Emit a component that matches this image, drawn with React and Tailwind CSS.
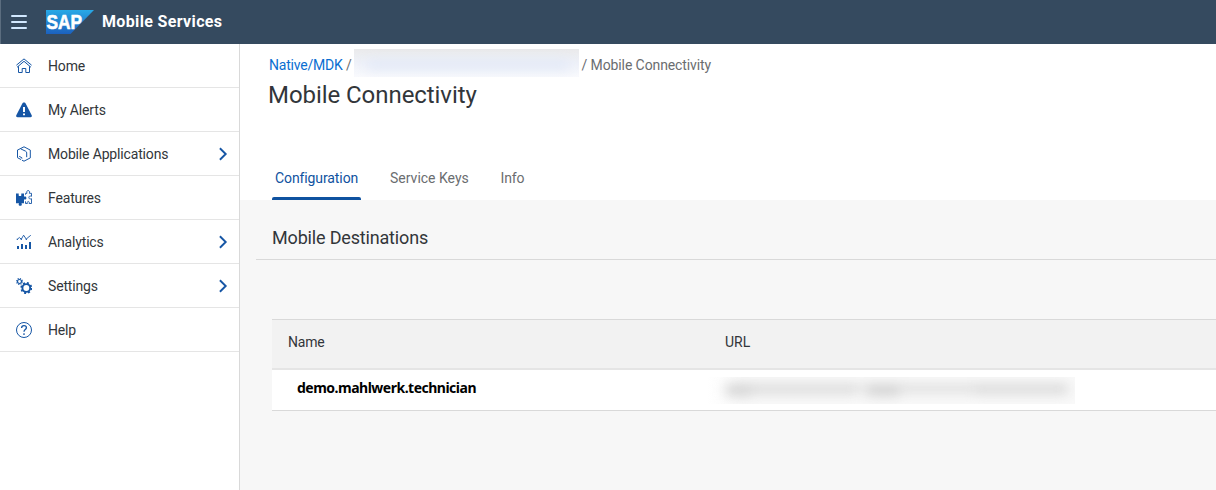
import React from "react";

const Svg = ({ children }) => (
  <svg width="16" height="16" viewBox="0 0 16 16" fill="none" stroke="currentColor" strokeWidth="1" className="block shrink-0 text-[#1656a5]">
    {children}
  </svg>
);

const HomeIcon = () => (
  <Svg>
    <path d="M0.400 7.200 8 .9l7.600 6.300M1 9.300 8 3.300l7 6" />
    <path d="M2.500 8.300v6.200h3.700v-4h3.600v4h3.700V8.300" />
  </Svg>
);

const AlertIcon = () => (
  <Svg>
    <path fill="currentColor" stroke="none" fillRule="evenodd" d="M8 0.500c.9 0 1.400.5 1.800 1.200l5.900 11.600c.5 1.100 0 2-1.200 2h-13c-1.200 0-1.700-.9-1.200-2L6.200 1.700C6.600 1 7.100.5 8 .5ZM7 5v5h2V5Zm0 6.500v1.700h2v-1.700Z" />
  </Svg>
);

const BoxIcon = () => (
  <Svg>
    <path d="M1.500 4v7.700l3.600 1.900M1.300 4.200 8 .8l6.300 3.300v7.800L8 15.200l-2-1" />
    <path d="M4.800 2.900 9.600 5.200c.8.400 1.100.9 1.100 1.700v4.300" />
    <path d="M3.200 10.300l2.700 1.500v.8" />
  </Svg>
);

const PuzzleIcon = () => (
  <Svg>
    <path fill="currentColor" stroke="none" d="M0 3.500h2.700v1.700c0 1.200 2.600 1.200 2.600 0V3.500H8v3.300c1.400-.9 2.400-.1 2.400 1.200s-1 2-2.400 1.200v4H5.500c.8 1.700 0 2.600-1.200 2.600s-2.200-.9-1.300-2.600H0Z" />
    <path strokeWidth=".9" d="M9.500 4.700V3.300h1.500C10.300 1.500 11 .6 12.200 .6s1.800.9 1.100 2.700h2.200v3c-1.700-.6-2.600 0-2.600 1.200s.9 1.800 2.600 1.200v4.800h-2.400c.4-1.600-.1-2-.8-2s-1.400.6-.9 2H9.500v-2.200" />
  </Svg>
);

const ChartIcon = () => (
  <Svg>
    <path strokeWidth=".9" d="M1.300 5.400l2-1.900 2 1.700L7.600 1.200l2.700 4 1.700-1.700 2.800-2.200" />
    <g fill="currentColor" stroke="none">
      <rect x="0.700" y="4.700" width="1.200" height="1.200" />
      <rect x="4.700" y="4.700" width="1.200" height="1.200" />
      <rect x="9.700" y="4.700" width="1.200" height="1.200" />
    </g>
    <path fill="currentColor" stroke="none" d="M1 12h2v3H1zM5 10h2v5H5zM9 11h2v4H9zM13 8h2v7h-2z" />
  </Svg>
);

const GearsIcon = () => (
  <Svg>
    <circle cx="3.500" cy="3.500" r="2" strokeWidth="1.200" />
    <circle cx="3.500" cy="3.500" r="2.900" strokeWidth="1.200" strokeDasharray="1.140 1.140" />
    <circle cx="10.300" cy="10" r="3.900" strokeWidth="1.900" />
    <circle cx="10.300" cy="10" r="5.100" strokeWidth="1.700" strokeDasharray="2.003 2.003" />
  </Svg>
);

const HelpIcon = () => (
  <Svg>
    <circle cx="8" cy="8" r="7.500" />
    <path strokeWidth="1.300" d="M5.600 6c0-1.500 1-2.300 2.400-2.300s2.400.8 2.400 2C10.400 7.500 8 7.600 8 9.700M8 11.200v1.700" />
  </Svg>
);

const Chevron = () => (
  <svg width="10" height="14" viewBox="0 0 10 14" fill="none" stroke="#1656a5" strokeWidth="1.900" className="mr-[11px] block">
    <path d="M1.900 1.300 7.700 7l-5.800 5.700" />
  </svg>
);

const items = [
  { label: "Home", Icon: HomeIcon },
  { label: "My Alerts", Icon: AlertIcon },
  { label: "Mobile Applications", Icon: BoxIcon, more: true },
  { label: "Features", Icon: PuzzleIcon },
  { label: "Analytics", Icon: ChartIcon, more: true },
  { label: "Settings", Icon: GearsIcon, more: true },
  { label: "Help", Icon: HelpIcon },
];

function Header() {
  return (
    <header className="flex h-11 shrink-0 items-center border-l border-[#5b6d7f] bg-[#354a5f]">
      <div className="ml-[10px] flex w-4 flex-col gap-1">
        <span className="h-[2px] rounded-full bg-[#d1e8ff]" />
        <span className="h-[2px] rounded-full bg-[#d1e8ff]" />
        <span className="h-[2px] rounded-full bg-[#d1e8ff]" />
      </div>
      <svg width="48" height="24" viewBox="0 0 48 24" className="ml-[19px] block">
        <defs>
          <linearGradient id="sap" x1="0" y1="0" x2="0" y2="1">
            <stop offset="0" stopColor="#29a9e6" />
            <stop offset="1" stopColor="#1c61be" />
          </linearGradient>
        </defs>
        <path d="M0 0h48L24.500 24H0Z" fill="url(#sap)" />
        <text x="0.600" y="18.800" textLength="35.500" lengthAdjust="spacingAndGlyphs" fontFamily="Liberation Sans, sans-serif" fontWeight="700" fontSize="19.500" fill="#fff" stroke="#fff" strokeWidth=".6">SAP</text>
      </svg>
      <h1 className="ml-2 text-[16px] font-bold leading-5 tracking-[0.35px] text-white">Mobile Services</h1>
    </header>
  );
}

function Sidebar() {
  return (
    <nav className="w-60 shrink-0 border-r border-[#d9d9d9] bg-white">
      {items.map(({ label, Icon, more }) => (
        <div key={label} className="flex h-11 items-center border-b border-[#e5e5e5] pl-4">
          <Icon />
          <span className="ml-4 flex-1 text-sm tracking-[-0.16px] text-[#32363a]">{label}</span>
          {more && <Chevron />}
        </div>
      ))}
    </nav>
  );
}

export default function App() {
  return (
    <div className="flex h-[490px] flex-col overflow-hidden bg-white font-['Roboto',sans-serif]">
      <Header />
      <div className="flex min-h-0 flex-1">
        <Sidebar />
        <main className="flex min-w-0 flex-1 flex-col bg-[#f7f7f7]">
          <div className="h-[156px] shrink-0 bg-white">
            <div className="flex h-[33px] items-start pl-[29px] pt-[5px] text-sm text-[#6a6d70]">
              <span className="mt-[6px] w-[78px] leading-5 tracking-[-0.2px] text-[#0a6ed1]">Native/MDK</span>
              <span className="-ml-px mt-[6px] w-[8px] leading-5">/</span>
              <div className="flex h-7 w-[225px] items-center overflow-hidden bg-linear-to-b from-[#eaeaeb] via-[#eff2f9] to-[#f9fafd]">
                <div className="ml-3 mt-1 h-2 w-[205px] rounded-full bg-[#dfe6f6] blur-[6px]" />
              </div>
              <span className="ml-[2.500px] mt-[6px] leading-5 tracking-[-0.1px]">/ Mobile Connectivity</span>
            </div>
            <h2 className="pl-7 pt-[3px] text-2xl leading-[30px] tracking-[-0.06px] text-[#32363a]">Mobile Connectivity</h2>
            <div className="ml-8 mt-[46px] flex h-11 text-sm text-[#6a6d70]">
              <div className="flex w-[89px] flex-col justify-between text-[#0f52a0]">
                <span className="pl-[3px] pt-3 leading-5 tracking-[-0.1px]">Configuration</span>
                <span className="h-[3px] rounded-t-[2px] bg-[#0f52a0]" />
              </div>
              <span className="ml-[29px] w-[79px] pt-3 leading-5">Service Keys</span>
              <span className="ml-[31.500px] pt-3 leading-5 tracking-[-0.1px]">Info</span>
            </div>
          </div>
          <h3 className="ml-4 h-[60px] shrink-0 border-b border-[#d9d9d9] pl-4 pt-[26px] text-lg leading-6 tracking-[-0.17px] text-[#32363a]">Mobile Destinations</h3>
          <div className="ml-8 mt-[59px] h-[92px] shrink-0 border-y border-[#d9d9d9] bg-white">
            <div className="flex h-[50px] items-center border-b-2 border-[#e5e5e5] bg-[#f2f2f2] pb-[5px] pl-4 text-sm text-[#32363a]">
              <span className="w-[437px] tracking-[-0.2px]">Name</span>
              <span>URL</span>
            </div>
            <div className="flex h-10 items-start pl-[25px]">
              <span className="w-[410px] whitespace-nowrap pt-2 font-['Noto_Sans',sans-serif] text-sm font-bold leading-5 tracking-[-0.5px] text-black">demo.mahlwerk.technician</span>
              <div className="mt-[7px] flex h-[27px] w-[368px] items-center overflow-hidden bg-linear-to-r from-white via-[#f9f9f9] via-10% to-[#f9f9f9]">
                <div className="-mt-1 ml-[18px] flex h-[10px] w-[344px] blur-[6px]">
                  <span className="h-3 w-[26px] rounded-l-full bg-[#d3d3d3]" />
                  <span className="h-[10px] w-[106px] bg-[#dadada]" />
                  <span className="h-2 w-[10px] bg-[#e6e6e6]" />
                  <span className="h-3 w-[32px] bg-[#d2d2d2]" />
                  <span className="h-[9px] w-[76px] bg-[#dedede]" />
                  <span className="h-[10px] flex-1 rounded-r-full bg-[#d8d8d8]" />
                </div>
              </div>
            </div>
          </div>
        </main>
      </div>
    </div>
  );
}
